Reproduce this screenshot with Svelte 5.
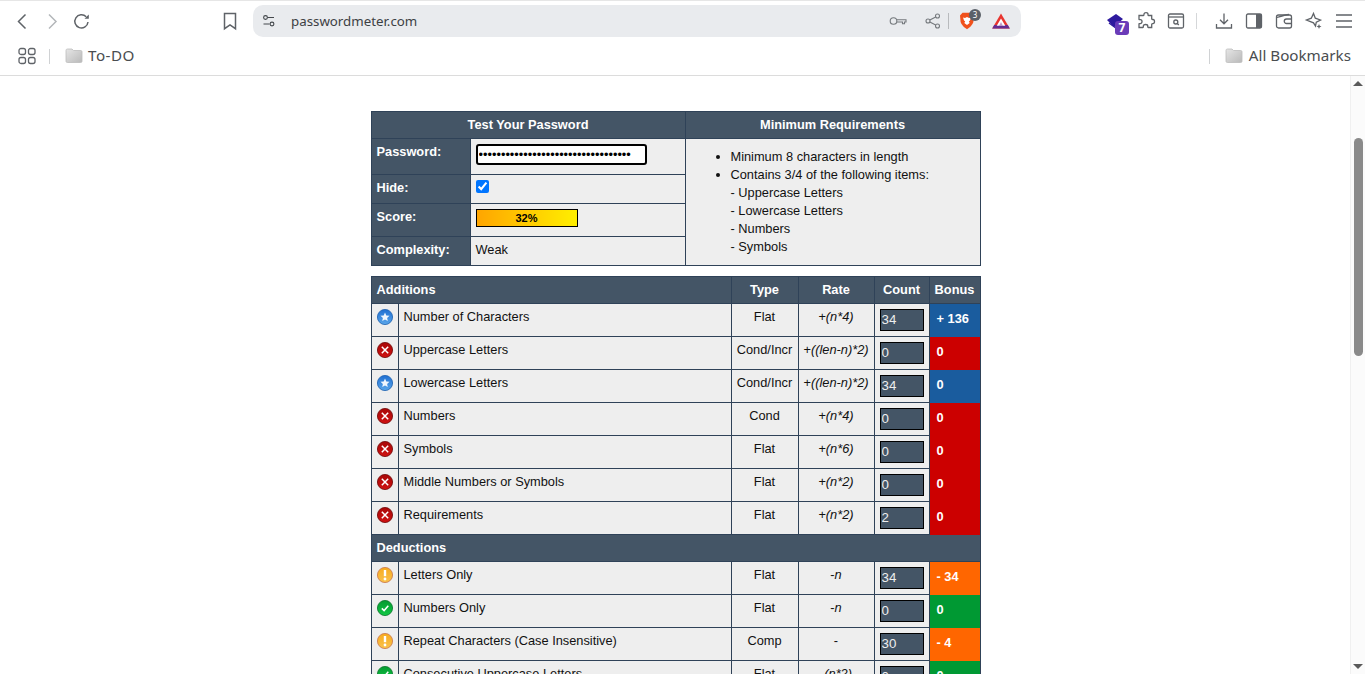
<script>
  const add = [
    ['star','Number of Characters','Flat','+','(n*4)','34','+ 136','blue'],
    ['x','Uppercase Letters','Cond/Incr','+','((len-n)*2)','0','0','red'],
    ['star','Lowercase Letters','Cond/Incr','+','((len-n)*2)','34','0','blue'],
    ['x','Numbers','Cond','+','(n*4)','0','0','red'],
    ['x','Symbols','Flat','+','(n*6)','0','0','red'],
    ['x','Middle Numbers or Symbols','Flat','+','(n*2)','0','0','red'],
    ['x','Requirements','Flat','+','(n*2)','2','0','red']
  ];
  const ded = [
    ['warn','Letters Only','Flat','-','n','34','- 34','orange'],
    ['ok','Numbers Only','Flat','-','n','0','0','green'],
    ['warn','Repeat Characters (Case Insensitive)','Comp','-','','30','- 4','orange'],
    ['ok','Consecutive Uppercase Letters','Flat','-','(n*2)','0','0','green']
  ];
</script>

{#snippet status(kind)}
  <svg class="status" viewBox="0 0 16 16" width="16" height="16">
    <circle cx="8" cy="8" r="7.6" fill={`url(#g-${kind})`} stroke={{star:'#1a5fb0',x:'#6e0606',warn:'#c9764a',ok:'#08752a'}[kind]} stroke-width=".8"/>
    {#if kind === 'star'}
      <path d="M8 3.500l1.300 3 3.200.3-2.400 2.100.7 3.200L8 10.400l-2.800 1.700.7-3.200-2.400-2.100 3.200-.3z" fill="#fff" opacity=".92"/>
    {:else if kind === 'x'}
      <path d="M4.800 4.800l6.400 6.400M11.200 4.800l-6.400 6.400" stroke="#fff" stroke-width="1.500"/>
    {:else if kind === 'warn'}
      <path d="M8 3v6.200" stroke="#fff" stroke-width="2.400"/><circle cx="8" cy="12" r="1.400" fill="#fff"/>
    {:else}
      <path d="M4.800 8.400l2.300 2.200 4.200-4.800" fill="none" stroke="#fff" stroke-width="1.500"/>
    {/if}
  </svg>
{/snippet}

{#snippet row(r)}
  <tr>
    <td class="ic">{@render status(r[0])}</td>
    <td>{r[1]}</td>
    <td class="mid">{r[2]}</td>
    <td class="mid">{r[3]}<i>{r[4]}</i></td>
    <td class="cnt"><input class="count" value={r[5]} readonly /></td>
    <td class={'bonus ' + r[7]}>{r[6]}</td>
  </tr>
{/snippet}

{#snippet folder()}
  <svg class="folder" viewBox="0 0 18 15" width="18" height="15"><path d="M1 2.500C1 1.500 1.500 1 2.500 1h4.500l1.500 1.500h7c1 0 1.500.5 1.500 1.500v9c0 1-.5 1.500-1.500 1.500h-13C1.500 14.500 1 14 1 13z" fill="url(#g-folder)" stroke="#bdbdbd" stroke-width=".8"/></svg>
{/snippet}

<svg class="defs" width="0" height="0">
  <defs>
    <linearGradient id="g-star" x1="0" y1="0" x2="0" y2="1"><stop offset="0" stop-color="#1f6fd2"/><stop offset="1" stop-color="#5aa6ea"/></linearGradient>
    <linearGradient id="g-x" x1="0" y1="0" x2="0" y2="1"><stop offset="0" stop-color="#a80808"/><stop offset="1" stop-color="#cf1212"/></linearGradient>
    <linearGradient id="g-warn" x1="0" y1="0" x2="0" y2="1"><stop offset="0" stop-color="#f7ab1e"/><stop offset="1" stop-color="#f9c24c"/></linearGradient>
    <linearGradient id="g-ok" x1="0" y1="0" x2="0" y2="1"><stop offset="0" stop-color="#049a30"/><stop offset="1" stop-color="#12c846"/></linearGradient>
    <linearGradient id="g-folder" x1="0" y1="0" x2="1" y2="1"><stop offset="0" stop-color="#e6e6e6"/><stop offset="1" stop-color="#b9b9b9"/></linearGradient>
  </defs>
</svg>

<div class="window">
  <header class="chrome">
    <div class="toolbar">
      <div class="nav">
        <svg viewBox="0 0 20 20" width="20" height="20"><path d="M13.500 3.500L6.500 10.500l7 7" class="ln"/></svg>
        <svg viewBox="0 0 20 20" width="20" height="20"><path d="M7 3.500l7 7-7 7" class="ln off"/></svg>
        <svg viewBox="0 0 20 20" width="20" height="20"><path d="M16 11a6.600 6.600 0 1 1-1.800-5.200" class="ln"/><path d="M16.800 3.400v4.300h-4.300z" fill="#5f6368"/></svg>
      </div>
      <svg class="bm" viewBox="0 0 20 20" width="20" height="20"><path d="M4.500 2.500h11v15.200L10 13.800l-5.500 3.900z" class="ln"/></svg>
      <div class="url">
        <svg viewBox="0 0 16 16" width="16" height="16"><circle cx="4.500" cy="4.500" r="1.900" class="thin"/><path d="M6.500 4.500h6.500M2.500 11h6" class="thin"/><circle cx="11" cy="11" r="1.900" class="thin"/></svg>
        <span class="addr">passwordmeter.com</span>
        <span class="spacer"></span>
        <svg class="key" viewBox="0 0 18 12" width="18" height="12"><circle cx="4.500" cy="6" r="3.300" class="thin g"/><path d="M8 4.700h9v2.300h-1.500v1.800h-2v-1.800H8" class="thin g"/></svg>
        <svg class="share" viewBox="0 0 16 16" width="16" height="16"><circle cx="3" cy="8" r="2" class="thin g"/><circle cx="12.500" cy="3" r="2" class="thin g"/><circle cx="12.500" cy="13" r="2" class="thin g"/><path d="M4.800 7l5.900-3.100M4.800 9l5.900 3.100" class="thin g"/></svg>
        <span class="sep"></span>
        <span class="brave">
          <svg viewBox="0 0 16 18" width="16" height="18"><path d="M3.500.8h9l2.500 2.700-.6 6.300c-.4 2.600-3.800 6-6.400 7.400-2.600-1.400-6-4.800-6.400-7.400L1 3.500z" fill="#f0511c"/><path d="M4 5.500l2 .6 2-1 2 1 2-.6-1 3-1.200 1 .9 1.600L8 13 5.300 11.100l.9-1.600L5 8.500z" fill="#fff"/></svg>
          <b class="badge">3</b>
        </span>
        <svg class="bat" viewBox="0 0 18 16" width="18" height="16"><path d="M9 .5L17.800 15.500H.2z" fill="#e8352f"/><path d="M.2 15.500L2.200 12h13.600l2 3.500z" fill="#662d91"/><path d="M9 5.500l4.300 7.300H4.700z" fill="#fff"/><path d="M9 9l1.900 3.800H7.100z" fill="#8a3a8f" opacity=".5"/></svg>
      </div>
      <div class="exts">
        <span class="grad">
          <svg viewBox="0 0 18 16" width="18" height="16"><path d="M0 7L9 1l7 5-9 8z" fill="#2e1a9e"/><path d="M2 10l7 5 6-5" fill="none" stroke="#2e1a9e" stroke-width="1.500"/></svg>
          <b>7</b>
        </span>
        <svg viewBox="0 0 20 20" width="20" height="20"><path d="M8 3.200c0-2.200 4-2.200 4 0 0 .9 0 1.300.6 1.300h3.100v3.300c0 .8.700.7 1.300.7 2 0 2 4.200 0 4.200-.6 0-1.300-.1-1.300.7v3.100h-3.500c-.7 0-.4-.8-.4-1.300 0-2.300-4.500-2.300-4.500 0 0 .5.300 1.300-.4 1.300H3v-3.500c0-.7.800-.4 1.300-.4 2.300 0 2.300-4 0-4-.5 0-1.300.3-1.300-.4V4.500h4.400c.6 0 .6-.4.600-1.300z" class="ln1"/></svg>
        <svg viewBox="0 0 20 20" width="20" height="20"><rect x="2.500" y="3" width="15" height="14" rx="1.500" class="ln1"/><path d="M2.500 6h15" class="ln1"/><circle cx="9.800" cy="11" r="2" class="ln1"/><path d="M11.300 12.500l1.500 1.500" class="ln1"/></svg>
        <span class="sep2"></span>
        <svg viewBox="0 0 20 20" width="20" height="20"><path d="M10 2.500v10M6 8.800l4 4 4-4M2.500 13v4h15v-4" class="ln1"/></svg>
        <svg viewBox="0 0 20 20" width="20" height="20"><rect x="2.500" y="3" width="15" height="14" rx="1.500" class="ln1"/><rect x="12" y="3" width="5.500" height="14" fill="#5f6368"/></svg>
        <svg viewBox="0 0 20 20" width="20" height="20"><rect x="2.500" y="4" width="15" height="13" rx="2" class="ln1"/><path d="M3 6.500c3-1 9-3 12-3M17.500 8h-5a2.200 2.200 0 0 0 0 4.500h5" class="ln1"/></svg>
        <svg viewBox="0 0 20 20" width="20" height="20"><path d="M9.500 2.500l1.800 4.700 5.200 1.800-4.200 2.200-.8 3.800-2-3.200L2.500 9l4.800-1.800z" class="ln1"/><path d="M15 13l.7 1.800 1.800.7-1.800.7L15 18l-.7-1.800-1.800-.7 1.800-.7z" fill="#5f6368"/></svg>
        <svg viewBox="0 0 20 20" width="20" height="20"><path d="M2 4h16M2 10h16M2 16h16" class="ln1"/></svg>
      </div>
    </div>
    <div class="bookmarks">
      <svg class="apps" viewBox="0 0 18 18" width="18" height="18"><rect x="1" y="1.500" width="6.500" height="6" rx="2" class="ln1"/><rect x="10.500" y="1.500" width="6.500" height="6" rx="2" class="ln1"/><rect x="1" y="10.500" width="6.500" height="6" rx="2" class="ln1"/><rect x="10.500" y="10.500" width="6.500" height="6" rx="2" class="ln1"/></svg>
      <span class="bsep"></span>
      {@render folder()}
      <span class="blabel todo">To-DO</span>
      <span class="spacer"></span>
      <span class="bsep"></span>
      {@render folder()}
      <span class="blabel">All Bookmarks</span>
    </div>
  </header>

  <div class="body">
    <main class="page">
      <table class="top">
        <colgroup><col class="t1"/><col class="t2"/><col class="t3"/></colgroup>
        <tbody>
          <tr class="h27"><th colspan="2" class="c">Test Your Password</th><th class="c">Minimum Requirements</th></tr>
          <tr class="h36">
            <th>Password:</th>
            <td><input class="pw" type="password" value="abcdefghijklmnopqrstuvwxyzabcdefgh" readonly /></td>
            <td rowspan="4" class="req">
              <ul>
                <li>Minimum 8 characters in length</li>
                <li>Contains 3/4 of the following items:<br/>- Uppercase Letters<br/>- Lowercase Letters<br/>- Numbers<br/>- Symbols</li>
              </ul>
            </td>
          </tr>
          <tr class="h29"><th>Hide:</th><td><input class="chk" type="checkbox" checked /></td></tr>
          <tr class="h33"><th>Score:</th><td><div class="score">32%</div></td></tr>
          <tr class="h29"><th>Complexity:</th><td>Weak</td></tr>
        </tbody>
      </table>

      <table class="main">
        <colgroup><col class="a1"/><col class="a2"/><col class="a3"/><col class="a4"/><col class="a5"/><col class="a6"/></colgroup>
        <tbody>
          <tr class="h27"><th colspan="2">Additions</th><th class="c">Type</th><th class="c">Rate</th><th class="c">Count</th><th class="c">Bonus</th></tr>
          {#each add as r}{@render row(r)}{/each}
          <tr class="h27"><th colspan="6">Deductions</th></tr>
          {#each ded as r}{@render row(r)}{/each}
        </tbody>
      </table>
    </main>
    <aside class="scroll">
      <span class="up"></span>
      <span class="thumb"></span>
      <span class="spacer"></span>
      <span class="down"></span>
    </aside>
  </div>
</div>

<style>
  :global(body) { margin: 0; background: #fff; overflow: hidden; }
  .defs { position: absolute; }
  .window { height: 674px; display: flex; flex-direction: column; overflow: hidden; }
  .chrome { height: 76px; box-sizing: border-box; border-top: 1px solid #e6e6e6; border-bottom: 1px solid #dcdcdc; background: #fff; font-family: "Noto Sans", sans-serif; color: #3c4043; flex: none; }
  .toolbar { height: 36px; box-sizing: border-box; padding-top: 4px; display: flex; align-items: center; }
  .nav { display: flex; gap: 10px; margin-left: 12px; width: 90px; }
  .bm { margin: 0 0 0 118px; }
  .ln, .ln1, .thin { fill: none; stroke: #5f6368; stroke-width: 1.5; }
  .ln.off { stroke: #b4b7ba; }
  .ln1 { stroke-width: 1.3; }
  .thin { stroke-width: 1.1; stroke: #44484c; }
  .thin.g { stroke: #75797d; }
  .url { margin-left: 13px; width: 768px; height: 32px; background: #e9ebee; border-radius: 10px; display: flex; align-items: center; padding-left: 8px; box-sizing: border-box; }
  .addr { font-size: 13.300px; margin-left: 14px; color: #3c4043; }
  .spacer { flex: 1; }
  .key { margin-right: 18px; }
  .share { margin-right: 7px; }
  .sep { width: 1px; height: 16px; background: #b8babd; margin-right: 10px; }
  .brave { position: relative; display: block; width: 16px; height: 18px; margin-right: 17px; }
  .brave svg { display: block; }
  .badge { position: absolute; left: 10px; top: -3px; width: 12px; height: 12px; border-radius: 50%; background: #5b6068; color: #fff; font-size: 8px; font-weight: 400; line-height: 12px; text-align: center; }
  .bat { margin-right: 11px; }
  .exts { margin-left: 86px; display: flex; align-items: center; gap: 10px; }
  .grad { position: relative; display: block; width: 18px; height: 16px; margin-right: 1px; }
  .grad svg { display: block; }
  .grad b { position: absolute; left: 8px; top: 8px; width: 14px; height: 14px; border-radius: 3px; background: #6a3bb8; color: #fff; font: 700 12px/14px "Noto Sans", sans-serif; text-align: center; }
  .sep2 { width: 1px; height: 16px; background: #d5d7d9; margin: 0 7px 0 0; }
  .bookmarks { height: 38px; display: flex; align-items: center; padding: 0 14px 0 18px; box-sizing: border-box; }
  .apps { margin-right: 13px; }
  .bsep { width: 1px; height: 15px; background: #d0d2d4; margin-right: 15px; }
  .folder { margin-right: 6px; margin-top: -2px; }
  .blabel { font-size: 15.200px; color: #4a4d50; margin-bottom: 2px; }
  .todo { letter-spacing: .5px; margin-left: -1px; }

  .body { flex: 1; display: flex; min-height: 0; }
  .page { flex: 1; min-width: 0; padding-top: 35px; overflow: hidden; font-family: "Liberation Sans", Arial, sans-serif; font-size: 12.800px; color: #111; }
  table { border-collapse: collapse; table-layout: fixed; width: 609px; margin: 0 auto; position: relative; left: .5px; }
  .top { margin-bottom: 10px; }
  th, td { border: 1px solid #2f4258; padding: 5px; vertical-align: top; text-align: left; background: #eee; line-height: 15px; }
  th { background: #445566; color: #fff; font-weight: 700; }
  th.c { text-align: center; padding: 5px 0 0; }
  .t1 { width: 99px; } .t2 { width: 215px; } .t3 { width: 295px; }
  .a1 { width: 27px; } .a2 { width: 333px; } .a3 { width: 67px; } .a4 { width: 76px; } .a5 { width: 55px; } .a6 { width: 51px; }
  .h27 { height: 27px; } .h36 { height: 36px; } .h29 { height: 29px; } .h33 { height: 33px; }
  .h27 th { padding-top: 5px; padding-bottom: 5px; }
  .main tr { height: 33px; }
  .main tr.h27 { height: 27px; }
  .top th { padding-top: 5px; }
  .pw { display: block; box-sizing: border-box; width: 171px; height: 21px; border: 2px solid #000; border-radius: 3px; padding: 0 1px; font-size: 12.800px; background: #fff; outline: none; letter-spacing: 0; margin: 0; }
  .chk { display: block; width: 13px; height: 13px; margin: 0; accent-color: #0075ff; }
  .score { width: 102px; height: 18px; box-sizing: border-box; border: 1px solid #000; background: linear-gradient(90deg, #ffa500, #ffef00); color: #000; font: 700 11px/16px "Liberation Sans", sans-serif; text-align: center; }
  .req { padding: 9px 0 0; vertical-align: top; line-height: 18px; }
  ul { margin: 0; padding: 0 0 0 45px; }
  .ic { padding: 5px 0 0 5px; }
  .status { display: block; }
  .mid { text-align: center; padding-left: 0; padding-right: 0; }
  i { font-style: italic; }
  .cnt { padding: 5px 0 0 5px; }
  .count { display: block; box-sizing: border-box; width: 44px; height: 22px; margin: 0; border: 1.500px solid #000; background: #445566; color: #eee; font: 13.300px "Liberation Sans", sans-serif; padding: 0 1px 1px; outline: none; }
  .bonus { color: #fff; font-weight: 700; padding: 7px 0 0 7px; border-top-color: transparent; border-bottom-color: transparent; }
  .blue { background: #1a5c9e; }
  .red { background: #cc0000; }
  .orange { background: #ff6600; }
  .green { background: #009933; }

  .scroll { width: 15px; flex: none; display: flex; flex-direction: column; align-items: center; background: #fbfbfb; border-left: 1px solid #f0f0f0; box-sizing: border-box; }
  .up { margin-top: 5px; width: 0; height: 0; border-left: 5px solid transparent; border-right: 5px solid transparent; border-bottom: 5px solid #5a5a5a; }
  .thumb { margin-top: 52px; width: 9px; height: 218px; border-radius: 5px; background: #8a8a8a; }
  .down { margin-bottom: 5px; width: 0; height: 0; border-left: 5px solid transparent; border-right: 5px solid transparent; border-top: 5px solid #5a5a5a; }
</style>
